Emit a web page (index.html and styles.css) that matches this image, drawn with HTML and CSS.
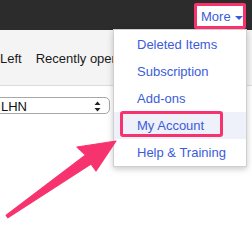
FILE: index.html
```html
<!DOCTYPE html>
<html>
<head>
<meta charset="utf-8">
<link rel="stylesheet" href="styles.css">
</head>
<body>
<div class="page">
  <header class="topbar">
    <div class="more">
      <span class="more-label">More</span>
      <span class="caret"></span>
    </div>
  </header>
  <nav class="toolbar">
    <span class="tool">Left</span>
    <span class="tool">Recently opened</span>
  </nav>
  <main class="content">
    <div class="select">
      <span class="select-value">LHN</span>
      <svg class="select-arrows" width="7" height="11" viewBox="0 0 7 11">
        <path d="M3.5 0.5 L6.5 4 L0.5 4 Z" fill="#222"/>
        <path d="M3.5 10.5 L6.5 7 L0.5 7 Z" fill="#222"/>
      </svg>
    </div>
  </main>

  <ul class="menu">
    <li class="item">Deleted Items</li>
    <li class="item">Subscription</li>
    <li class="item">Add-ons</li>
    <li class="item active">My Account<span class="mark"></span></li>
    <li class="item">Help &amp; Training</li>
  </ul>

  <svg class="arrow" width="252" height="226" viewBox="0 0 252 226">
    <polygon points="6.2,215.3 85.6,155 77,147 116,141 96,171 91,164 7.8,217.7" fill="#f7336f" stroke="#f7336f" stroke-width="1.2" stroke-linejoin="round"/>
  </svg>
</div>
</body>
</html>
```
FILE: styles.css
```css
* { box-sizing: border-box; }
html, body {
  margin: 0;
  padding: 0;
  width: 252px;
  height: 226px;
  overflow: hidden;
  background: #fff;
  font-family: "Liberation Sans", Arial, sans-serif;
  font-size: 13px;
}
.page {
  position: relative;
  width: 252px;
  height: 226px;
  overflow: hidden;
}
.topbar {
  height: 30px;
  background: #2c2c2c;
  display: flex;
  justify-content: flex-end;
  align-items: flex-start;
  padding-right: 6px;
  padding-top: 3px;
}
.more {
  height: 26px;
  width: 52px;
  border: 3px solid #f7336f;
  border-radius: 2px;
  background: #fff;
  display: flex;
  align-items: center;
  padding-left: 4px;
  gap: 4px;
  color: #3b5cd9;
  position: relative;
  z-index: 3;
}
.more-label {
  font-size: 13px;
  line-height: 15px;
  padding-top: 1px;
}
.caret {
  width: 0;
  height: 0;
  border-left: 4px solid transparent;
  border-right: 4px solid transparent;
  border-top: 4px solid #3b5cd9;
  margin-top: 3px;
}
.toolbar {
  height: 56px;
  background: #f4f4f4;
  border-bottom: 1px solid #dcdcdc;
  display: flex;
  align-items: center;
  gap: 14px;
  padding-top: 1px;
  color: #1a1a1a;
  white-space: nowrap;
}
.tool { line-height: 15px; }
.content {
  padding-top: 11px;
}
.select {
  margin-left: -8px;
  width: 118px;
  height: 17px;
  border: 1px solid #a8a8a8;
  border-radius: 5px;
  background: #fff;
  display: flex;
  align-items: center;
  justify-content: space-between;
  padding-left: 8px;
  padding-right: 8px;
  color: #111;
}
.select-value { line-height: 15px; padding-top: 1px; }
.select-arrows { display: block; margin-top: 1px; }
.menu {
  position: absolute;
  left: 113px;
  top: 29px;
  width: 134px;
  margin: 0;
  padding: 1px 0 0 0;
  list-style: none;
  background: #fff;
  border: 1px solid #cfcfcf;
  box-shadow: 0 2px 6px rgba(0,0,0,0.22);
  z-index: 2;
}
.item {
  position: relative;
  height: 27px;
  line-height: 27px;
  padding-left: 23px;
  color: #3b5cd9;
  white-space: nowrap;
}
.item.active {
  background: #eef1fa;
}
.mark {
  position: absolute;
  left: 6px;
  top: -1px;
  width: 103px;
  height: 26px;
  border: 3px solid #f7336f;
  border-radius: 3px;
}
.arrow {
  position: absolute;
  left: 0;
  top: 0;
  z-index: 4;
}
```
